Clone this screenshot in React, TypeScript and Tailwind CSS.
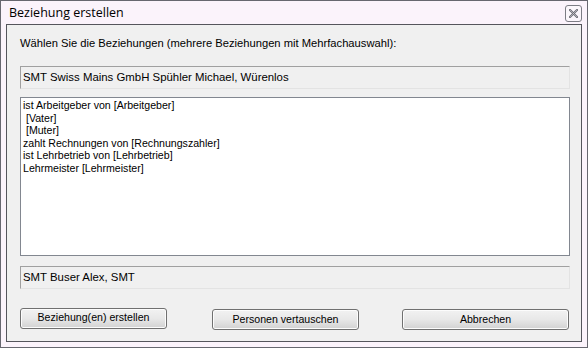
const RELATIONS = [
  'ist Arbeitgeber von [Arbeitgeber]',
  ' [Vater]',
  ' [Muter]',
  'zahlt Rechnungen von [Rechnungszahler]',
  'ist Lehrbetrieb von [Lehrbetrieb]',
  'Lehrmeister [Lehrmeister]',
]

function CloseButton() {
  return (
    <div className="flex h-[17px] w-[17px] items-center justify-center rounded-[3px] border border-[#7c7c84] bg-[#fbf6fb]">
      <svg width="9" height="9" viewBox="0 0 9 9" aria-hidden>
        <path d="M1 1 L8 8 M8 1 L1 8" stroke="#6a6a72" strokeWidth="2" strokeLinecap="square" />
        <path d="M1 1 L8 8 M8 1 L1 8" stroke="#d8d8dc" strokeWidth="0.6" />
      </svg>
    </div>
  )
}

function ReadOnlyBox({ text }: { text: string }) {
  return (
    <div className="flex h-[23px] w-[550px] items-center border border-t-[#a0a0a0] border-l-[#a0a0a0] border-r-[#e3e3e3] border-b-[#e3e3e3] bg-[#f0f0f0] pl-[2px] text-[11.4px] text-black">
      {text}
    </div>
  )
}

function WinButton({ label, width }: { label: string; width: string }) {
  return (
    <button
      type="button"
      className={`${width} h-[21px] rounded-[3px] border border-[#707070] bg-gradient-to-b from-[#f2f2f2] via-[#e8e8e8] to-[#d2d2d2] text-[10.6px] text-black shadow-[inset_0_0_0_1px_#fcfcfc]`}
    >
      {label}
    </button>
  )
}

export default function App() {
  return (
    <div
      className="flex h-[348px] w-[588px] flex-col border border-[#67676f] bg-[#fbf3fb]"
      style={{ fontFamily: '"Liberation Sans", Arial, sans-serif' }}
    >
      <div className="flex h-[23px] items-center justify-between pl-[8px] pr-[5px] pt-[1px]">
        <span className="text-[12.5px] text-black" style={{ fontFamily: '"Open Sans", "Liberation Sans", sans-serif' }}>
          Beziehung erstellen
        </span>
        <CloseButton />
      </div>
      <div className="mx-[5px] mb-[5px] flex flex-1 flex-col border border-[#55555c] bg-[#f0f0f0] pl-[13px]">
        <p className="mt-[12px] h-[13px] text-[11.2px] leading-[13px] text-black">
          Wählen Sie die Beziehungen (mehrere Beziehungen mit Mehrfachauswahl):
        </p>
        <div className="mt-[16px]">
          <ReadOnlyBox text="SMT Swiss Mains GmbH Spühler Michael, Würenlos" />
        </div>
        <div className="mt-[8px] h-[159px] w-[550px] border border-[#828790] bg-white px-[2px] pt-[1px]">
          {RELATIONS.map((r) => (
            <div key={r} className="h-[12.6px] whitespace-pre text-[10.6px] leading-[12.6px] text-black">
              {r}
            </div>
          ))}
        </div>
        <div className="mt-[10px]">
          <ReadOnlyBox text="SMT Buser Alex, SMT" />
        </div>
        <div className="mt-[17px] flex items-center">
          <WinButton label="Beziehung(en) erstellen" width="w-[147px]" />
          <div className="ml-[45px]">
            <WinButton label="Personen vertauschen" width="w-[147px]" />
          </div>
          <div className="ml-[43px]">
            <WinButton label="Abbrechen" width="w-[167px]" />
          </div>
        </div>
      </div>
    </div>
  )
}
